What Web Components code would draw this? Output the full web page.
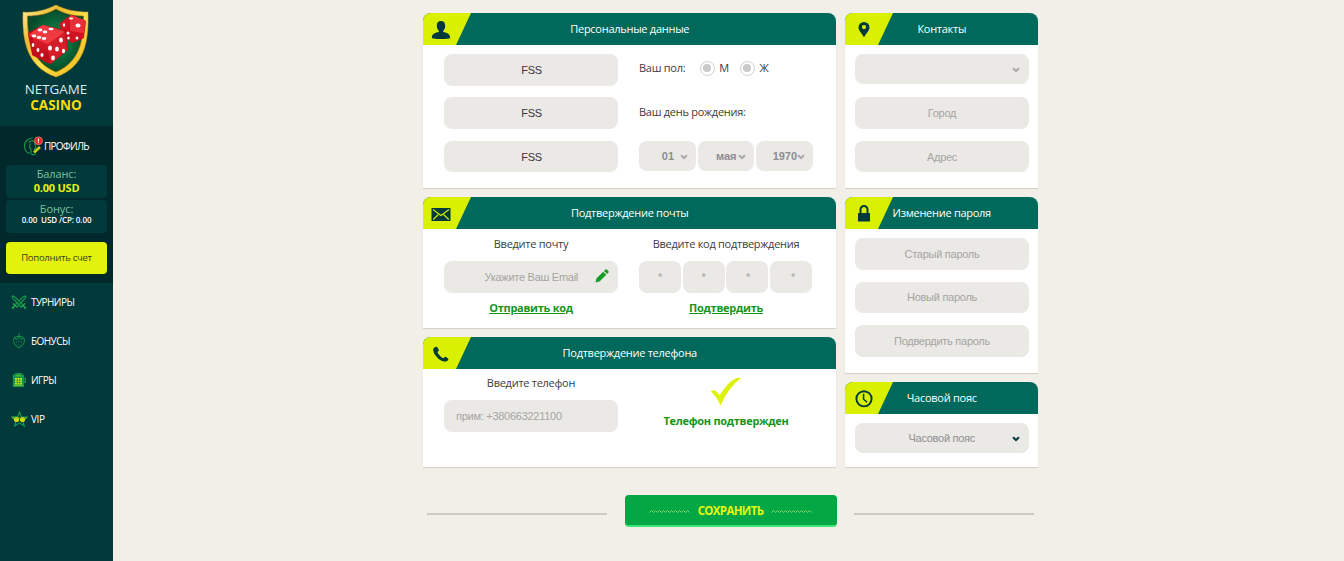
<!DOCTYPE html>
<html lang="ru">
<head>
<meta charset="utf-8">
<title>Netgame Casino — Профиль</title>
<style>
html,body{margin:0;height:100%;overflow:hidden}
body{background:#f2efe8;font-family:"Open Sans",sans-serif;font-size:11px;letter-spacing:-.27px;color:#3c3c3c}
</style>
</head>
<body>
<casino-app></casino-app>
<script>
const define = (name, html, setup) => {
  const tpl = document.createElement('template');
  tpl.innerHTML = html;
  customElements.define(name, class extends HTMLElement {
    constructor() {
      super();
      this.attachShadow({mode: 'open'}).append(tpl.content.cloneNode(true));
    }
    connectedCallback() { if (setup) setup(this, this.shadowRoot); }
  });
};

const ICONS = {
  user: '<svg width="20" height="20" viewBox="0 0 20 20" fill="#02393b"><path d="M10 1c2.700 0 4.200 2 4.200 4.700 0 2.500-1 4.100-2 5.100v1.300c3 .5 6.800 1.800 7 5.400 0 1-3 1.500-9.200 1.500S.8 18.500.8 17.500C1 13.900 4.800 12.600 7.800 12.100v-1.300c-1-1-2-2.600-2-5.100C5.800 3 7.300 1 10 1z"/></svg>',
  pin: '<svg width="20" height="20" viewBox="0 0 20 20"><path fill="#02393b" fill-rule="evenodd" d="M10 2a5.500 5.500 0 0 1 5.500 5.500C15.500 11 11.300 14 10 17.500 8.700 14 4.500 11 4.500 7.500A5.500 5.500 0 0 1 10 2zm0 3a2.100 2.100 0 1 0 0 4.200A2.100 2.100 0 0 0 10 5z"/></svg>',
  mail: '<svg width="20" height="20" viewBox="0 0 20 20"><rect x=".5" y="4" width="19" height="13" rx=".6" fill="#02393b"/><path d="M2 5.500l8 6 8-6M2.200 15.500l5.200-5M17.800 15.500l-5.200-5" fill="none" stroke="#d4ee04" stroke-width="1.100"/></svg>',
  phone: '<svg width="20" height="20" viewBox="0 0 20 20"><path fill="#02393b" d="M3.200 3.800l1.800-1q1-.3 1.500.6l1.300 2.500q.3.900-.5 1.400l-1 .8q.8 2.500 3.800 4.900 1.200.9 2.200 1.200l1.200-1q.8-.6 1.500-.1l2 1.500q.8.700.2 1.500-1.800 1.900-4.300 1.400-4.500-1-7.700-5.200Q2 8.500 2.300 5.200q.1-.9.900-1.400z"/></svg>',
  lock: '<svg width="20" height="20" viewBox="0 0 20 20"><path d="M6.500 9V5.500a3.500 3.500 0 0 1 7 0V9" fill="none" stroke="#02393b" stroke-width="2"/><rect x="4" y="9" width="12" height="8.500" rx=".6" fill="#02393b"/></svg>',
  clock: '<svg width="20" height="20" viewBox="0 0 20 20" fill="none" stroke="#02393b"><circle cx="10" cy="9.800" r="7.600" stroke-width="1.900"/><path d="M9.600 4.700v5.500l3.500 3" stroke-width="1.500"/></svg>',
  swords: '<svg width="16" height="16" viewBox="0 0 16 16" fill="none" stroke="#129447" stroke-width="1.300"><path d="M1 2l2.500.5 8 8M1 2l1 2.500 7.500 8M15 2l-2.500.5-8 8M15 2l-1 2.500-7.500 8"/><path d="M2 9.500l4.500 4M14 9.500l-4.500 4M4 11.500L1.500 14M12 11.500l2.500 2.500M1 13.500l1.500 1.300M15 13.500l-1.500 1.300" stroke="#22b04b"/></svg>',
  berry: '<svg width="16" height="16" viewBox="0 0 16 16" fill="none" stroke="#189a48"><path d="M4 4.200C1.800 6 2.500 9 3.700 11.200c1 1.800 2.900 3 4.300 3.300 1.400-.3 3.300-1.500 4.300-3.300 1.200-2.200 1.900-5.200-.3-7-2-1-6-1-8 0zM8 .5v3.500"/><path d="M4 5l2 1.500L8 4.500l2 2L12 5M5 9h1M8 7.800v1.400M10 9h1M6.500 12h.8M9 12h.8"/></svg>',
  slot: '<svg width="16" height="16" viewBox="0 0 16 16"><path fill="#159747" d="M4.500 1h6l.7 1.500H13v12.500H1.800V2.500h2z"/><path fill="#d5e70c" d="M4 6h7v6.500H4z"/><path d="M4 8.200h7M4 10.400h7M6.300 6v6.500M8.700 6v6.500" stroke="#159747" stroke-width=".7"/><path d="M5 3.800h5M3 13.500h8.500" stroke="#5fc12d"/><path d="M13 10.500h1.200V5.500" stroke="#1ca24b" stroke-width="1.200" fill="none"/></svg>',
  vip: '<svg width="18" height="16" viewBox="0 0 18 16"><path d="M8.500 1l1.800 4.800 5.700.1-4.300 3.600 1.600 5.500-4.800-3.200L3.700 15l1.600-5.500L1 5.900l5.700-.1z" fill="none" stroke="#199d49" stroke-width="1.100"/><circle cx="5.500" cy="8.500" r="2.600" fill="#c8db0b"/><circle cx="11.500" cy="8.500" r="2.600" fill="#c8db0b"/><path d="M1 7h15" stroke="#a1c818" stroke-width=".8"/></svg>'
};

/* Inline text run with optional spacing override */
define('ui-text', '<style>:host{display:inline-block;white-space:nowrap;line-height:16px}</style><slot></slot>', el => {
  if (el.getAttribute('ls')) el.style.letterSpacing = el.getAttribute('ls') + 'px';
});

define('ui-icon', '<style>:host{display:block;flex:none}svg{display:block}</style><span></span>');

define('ui-field', `<style>
:host{display:flex;align-items:center;justify-content:center;box-sizing:border-box;height:31.5px;border-radius:8px;background:#eae9e5;font:11px/16px "Liberation Sans",sans-serif;color:#a5a5a2;white-space:nowrap}
:host([filled]){color:#38363c;padding-left:1px}
:host([left]){justify-content:flex-start;padding-left:12px}
</style><slot></slot>`);

define('ui-select', `<style>
:host{display:grid;grid-template-columns:1fr 8px;align-items:center;box-sizing:border-box;height:30px;padding-right:9px;border-radius:8px;background:#eae9e5;font:11px/16px "Liberation Sans",sans-serif;color:#8d8d90;white-space:nowrap;--arrow:#a9a9a7}
:host([small]){padding-right:8px;font-weight:bold;letter-spacing:-.05px}
span{text-align:right}
:host([dark]){--arrow:#02393b}
svg{display:block;overflow:visible;margin-top:1px}
</style><span><slot></slot></span><svg width="8" height="6" viewBox="0 0 8 6"><path d="M1 1.300l3 2.800 3-2.800" fill="none" stroke="var(--arrow)" stroke-width="2"/></svg>`);

define('ui-radio', `<style>
:host{display:block;box-sizing:border-box;width:15px;height:15px;border:1px solid #cfcfcf;border-radius:50%;background:#fff;padding:2.500px}
i{display:block;width:8px;height:8px;border-radius:50%;background:#c9c9c9}
</style><i></i>`);

define('ui-card', `<style>
:host{display:flex;flex-direction:column;background:#fff;border-radius:8px 8px 0 0;box-shadow:0 1px 1px #d3cfc5}
header{display:flex;align-items:center;height:32px;box-sizing:border-box;border-radius:8px 8px 0 0;overflow:hidden;background:#00695c;color:#fff;flex:none}
.tab{width:48px;height:32px;margin-right:-48px;flex:none;background:#d9f000;clip-path:polygon(0 0,100% 0,33px 100%,0 100%);display:flex;align-items:center;padding:1px 0 0 var(--icon-inset,8px);box-sizing:border-box}
h2{flex:1;margin:0;font-size:11px;font-weight:400;text-align:center;line-height:32px;white-space:nowrap;padding-left:.5px}
.body{flex:1;display:flex;flex-direction:column}
</style><header><div class="tab"><ui-icon></ui-icon></div><h2><slot name="title"></slot></h2></header><div class="body"><slot></slot></div>`, (el, r) => {
  r.querySelector('ui-icon').shadowRoot.querySelector('span').innerHTML = ICONS[el.getAttribute('icon')];
});

define('nav-item', `<style>
:host{display:flex;align-items:center;height:39px;color:#fff;font-size:10px;padding-left:11px}
.i{width:20px;flex:none}
</style><div class="i"><ui-icon></ui-icon></div><slot></slot>`, (el, r) => {
  r.querySelector('ui-icon').shadowRoot.querySelector('span').innerHTML = ICONS[el.getAttribute('icon')];
});

define('brand-logo', `<style>
:host{display:flex;flex-direction:column;align-items:center;height:126px;width:112px;box-sizing:border-box;padding-top:3px;letter-spacing:0}
svg{display:block}
.a{font-size:13.400px;line-height:16px;color:#dcebea;margin-top:2px;font-weight:400}
.b{font-size:13.500px;line-height:16px;color:#f7dc0c;font-weight:700}
</style>
<svg width="72" height="76" viewBox="0 0 72 76">
<defs>
<linearGradient id="g" x1="0" y1="0" x2="1" y2="1"><stop offset="0" stop-color="#fff1a0"/><stop offset=".3" stop-color="#edb92f"/><stop offset=".55" stop-color="#fde14a"/><stop offset="1" stop-color="#f0b010"/></linearGradient>
<radialGradient id="f"><stop offset="0" stop-color="#16904e"/><stop offset="1" stop-color="#044b2b"/></radialGradient>
<linearGradient id="r" x1="0" y1="0" x2="0" y2="1"><stop offset="0" stop-color="#ee2b36"/><stop offset="1" stop-color="#b50714"/></linearGradient>
</defs>
<path d="M3 9C15 10 26 7 36 2c10 5 20 7 32 7 1 29-3 55-32 65C7 64 2 38 3 9z" fill="url(#g)" stroke="#c08a18" stroke-width=".5"/>
<path d="M7.500 13c11 0 20-2 28.500-7 9 5 17.500 7 27.500 7 0 25-4 46-27.500 56C12 59 7.500 38 7.500 13z" fill="url(#f)" stroke="#9a6b0c" stroke-width=".7"/>
<g stroke-linejoin="round">
<path d="M52 14l12 5-2 15-10 4-9-10-1-7z" fill="#cf1320" stroke="#cf1320" stroke-width="4"/>
<path d="M51 13l13 5-1 11-12-2z" fill="#e8303a" stroke="#e8303a" stroke-width="2"/>
<path d="M23 24l21 5 2 17-16 13-16-8-4-20z" fill="url(#r)" stroke="#c50e1b" stroke-width="4"/>
<path d="M23 23l20 6-15 11-18-8z" fill="#ef3a42" stroke="#ef3a42" stroke-width="2"/>
<path d="M28 42l16-11 2 15-15 13z" fill="#d51d29" stroke="#d51d29" stroke-width="2"/>
</g>
<g fill="#fff"><ellipse cx="20" cy="27" rx="2.400" ry="1.400"/><ellipse cx="25" cy="29" rx="2.400" ry="1.400"/><ellipse cx="31" cy="26" rx="2.500" ry="1.300"/><ellipse cx="14" cy="33" rx="2.300" ry="1.400"/><ellipse cx="19" cy="34.500" rx="2.300" ry="1.400"/><ellipse cx="24" cy="35.500" rx="2.300" ry="1.400"/>
<ellipse cx="13" cy="42" rx="1.300" ry="1.900"/><ellipse cx="18" cy="47" rx="1.400" ry="2"/><ellipse cx="22" cy="52" rx="1.500" ry="2"/>
<ellipse cx="30" cy="45" rx="2" ry="2.600"/><ellipse cx="41" cy="37" rx="1.900" ry="2.500"/><ellipse cx="37" cy="46" rx="1.900" ry="2.600"/><ellipse cx="43.500" cy="48" rx="1.600" ry="2.300"/><ellipse cx="33" cy="55" rx="1.900" ry="2.400"/>
<ellipse cx="58" cy="22.500" rx="2.500" ry="2"/><ellipse cx="51" cy="15.500" rx="2.200" ry="1.100"/><ellipse cx="44" cy="22" rx="1.200" ry="1.800"/><ellipse cx="48" cy="30" rx="1.500" ry="1.600"/><ellipse cx="48.500" cy="35" rx="1.300" ry="1.500"/><ellipse cx="57" cy="35" rx="1.400" ry="1.500"/></g>
</svg>
<ui-text class="a">NETGAME</ui-text><ui-text class="b">CASINO</ui-text>`);

define('side-bar', `<style>
:host{display:block;width:113px;flex:none;background:#02393b;height:561px}
.profile{height:157px;background:#01292c;box-sizing:border-box;padding:8px 6px 0}
.user{display:flex;align-items:center;height:23px;padding-left:17px;color:#fff;font-size:10px;gap:1px}
.box{display:flex;flex-direction:column;align-items:center;height:33px;border-radius:4px;background:#02393b;color:#7fc39b;margin-bottom:2px;padding-top:2px;box-sizing:border-box}
.box.first{margin-top:8px}
.box ui-text{line-height:14px;font-size:11px}
.box ui-text.l{letter-spacing:-.1px}
.box .v{color:#e3f20d;font-weight:700}
.box ui-text.w{color:#fff;font-size:8px;line-height:10px;white-space:pre;font-weight:600;letter-spacing:-.1px;margin-top:-1px}
.pay{height:32px;margin-top:9px;border-radius:4px;background:#e2f20b;color:#37461a;display:flex;align-items:center;justify-content:center;font-size:9.500px}
nav{margin-top:-.500px}
</style>
<brand-logo></brand-logo>
<div class="profile">
<div class="user"><svg width="20" height="20" viewBox="0 0 20 20" fill="none"><path d="M7 17.500C3 16.500 1.500 13 1.500 10c0-4 3-8 8-8M13 18c-2 .8-4 .6-5-.3M7.500 7.500C6 10 6.500 12 8 13v4M11.500 7.500c2 3 1 5 0 5.500v4M5.500 7q4-5 7 .5" stroke="#159447" stroke-width="1.200"/><path d="M11 16.500l6-5.500" stroke="#bfd016" stroke-width="2.600"/><circle cx="15.500" cy="4.800" r="4" fill="#ec2630" stroke="#ff8c86" stroke-width=".6"/><path d="M15.500 2.500v3M15.500 6.200v1" stroke="#fff"/></svg><ui-text ls="-0.75">ПРОФИЛЬ</ui-text></div>
<div class="box first"><ui-text class="l">Баланс:</ui-text><ui-text class="v" ls="-0.22">0.00 USD</ui-text></div>
<div class="box"><ui-text class="l">Бонус:</ui-text><ui-text class="w">0.00  USD /CP: 0.00</ui-text></div>
<div class="pay"><ui-text>Пополнить счет</ui-text></div>
</div>
<nav>
<nav-item icon="swords"><ui-text ls="-0.55">ТУРНИРЫ</ui-text></nav-item>
<nav-item icon="berry"><ui-text ls="-0.55">БОНУСЫ</ui-text></nav-item>
<nav-item icon="slot"><ui-text ls="-0.55">ИГРЫ</ui-text></nav-item>
<nav-item icon="vip"><ui-text ls="-0.4">VIP</ui-text></nav-item>
</nav>`);

define('save-button', `<style>
:host{display:flex;align-items:center;justify-content:center;gap:8px;box-sizing:border-box;width:212px;height:32px;border-radius:4px;background:#03a743;border-bottom:2px solid #3fe673;color:#e8f80c;font-size:11.500px;font-weight:700;padding-top:1px}
svg{display:block;margin-top:2px}
</style>
<svg width="41" height="5" viewBox="0 0 41 5"><path d="M.5 3.500l2-2 2 2 2-2 2 2 2-2 2 2 2-2 2 2 2-2 2 2 2-2 2 2 2-2 2 2 2-2 2 2 2-2 2 2 2-2 2 2" fill="none" stroke="#8be06a" stroke-width=".9"/></svg>
<slot></slot>
<svg width="41" height="5" viewBox="0 0 41 5"><path d="M.5 3.500l2-2 2 2 2-2 2 2 2-2 2 2 2-2 2 2 2-2 2 2 2-2 2 2 2-2 2 2 2-2 2 2 2-2 2 2 2-2 2 2" fill="none" stroke="#8be06a" stroke-width=".9"/></svg>`);

define('profile-form', `<style>
:host{display:block;width:615px;margin-left:310px;padding-top:13px}
.cols{display:grid;grid-template-columns:413px 193px;column-gap:9px}
.col{display:flex;flex-direction:column;gap:9px}
.col:last-child{--icon-inset:9px}
.two{display:grid;grid-template-columns:174px 174px;column-gap:21px;padding:9px 0 0 21px}
.stack{display:flex;flex-direction:column;gap:11.900px}
.right{padding:9px 9px 0 10px}
.pw{gap:12px}
.gender{display:flex;align-items:center;height:28px}
.gender ui-radio:first-of-type{margin-left:14.500px}
.gender ui-radio{margin-right:4.500px}
.gender ui-radio:last-of-type{margin-left:11px}
.birth{height:16px;margin-top:22px;line-height:16px;margin-bottom:21px}
.dates{display:grid;grid-template-columns:57px 56px 57px;gap:2px}
.center{display:flex;flex-direction:column;align-items:center}
.center ui-field{align-self:stretch}
.link{color:#16951d;font-weight:700;text-decoration:underline;margin-top:7px}
.code{display:grid;grid-template-columns:repeat(4,42px);column-gap:1.500px;align-self:flex-start}
.ok{color:#16951d;font-weight:700}
.mail{display:grid;grid-template-columns:1fr auto 14px;column-gap:17px;padding:0 9px 0 20px;box-sizing:border-box}
.save{display:flex;align-items:center;justify-content:space-between;margin-top:28px;padding:0 4px}
.save hr{width:180px;height:2px;border:0;margin:6px 0 0;background:#ceccbf}
</style>
<div class="cols">
<div class="col">
<ui-card icon="user" style="height:175px"><ui-text slot="title">Персональные данные</ui-text>
<div class="two"><div class="stack"><ui-field filled>FSS</ui-field><ui-field filled>FSS</ui-field><ui-field filled>FSS</ui-field></div>
<div><div class="gender"><ui-text>Ваш пол:</ui-text><ui-radio></ui-radio><ui-text>М</ui-text><ui-radio></ui-radio><ui-text>Ж</ui-text></div>
<div class="birth"><ui-text>Ваш день рождения:</ui-text></div>
<div class="dates"><ui-select small>01<span style="display:inline-block;width:6px"></span></ui-select><ui-select small>мая<span style="display:inline-block;width:1.5px"></span></ui-select><ui-select small>1970</ui-select></div></div></div></ui-card>
<ui-card icon="mail" style="height:131px"><ui-text slot="title">Подтверждение почты</ui-text>
<div class="two" style="padding-top:7px"><div class="center"><ui-text>Введите почту</ui-text><ui-field class="mail" style="margin-top:9px"><span></span><ui-text>Укажите Ваш Email</ui-text><svg style="justify-self:end;margin-top:-2px" width="14" height="14" viewBox="0 0 14 14" fill="#169c25"><path d="M.5 13.500l.9-4L8.200 2.700l3.100 3.100L4.500 12.600zM9 1.900l1.400-1.400q.7-.5 1.400 0l1.700 1.700q.5.700 0 1.400L12.100 5z"/></svg></ui-field><ui-text class="link">Отправить код</ui-text></div>
<div class="center"><ui-text>Введите код подтверждения</ui-text><div class="code" style="margin-top:9px"><ui-field>*</ui-field><ui-field>*</ui-field><ui-field><span style="padding-left:2px">*</span></ui-field><ui-field><span style="padding-left:5px">*</span></ui-field></div><ui-text class="link">Подтвердить</ui-text></div></div></ui-card>
<ui-card icon="phone" style="height:130px"><ui-text slot="title">Подтверждение телефона</ui-text>
<div class="two" style="padding-top:6px"><div class="center"><ui-text>Введите телефон</ui-text><ui-field left style="margin-top:9px">прим: +380663221100</ui-field></div>
<div class="center"><svg style="margin-top:2px" width="32" height="30" viewBox="0 0 32 30"><path d="M.8 14.500q2.500-2.500 5.200-.3 2 1.600 3.500 4.300Q18 4.500 26 1.200q3-.7 5-.2Q18 11 10.500 28.500 7 20 .8 14.500z" fill="#def10a"/></svg><ui-text class="ok" ls="-0.3" style="margin-top:6px">Телефон подтвержден</ui-text></div></div></ui-card>
</div>
<div class="col">
<ui-card icon="pin" style="height:175px"><ui-text slot="title">Контакты</ui-text><div class="stack right"><ui-select style="margin-bottom:1.500px"></ui-select><ui-field>Город</ui-field><ui-field>Адрес</ui-field></div></ui-card>
<ui-card icon="lock" style="height:176px"><ui-text slot="title">Изменение пароля</ui-text><div class="stack right pw"><ui-field>Старый пароль</ui-field><ui-field>Новый пароль</ui-field><ui-field>Подвердить пароль</ui-field></div></ui-card>
<ui-card icon="clock" style="height:85px"><ui-text slot="title">Часовой пояс</ui-text><div class="stack right"><ui-select dark><ui-text style="padding-right:37px">Часовой пояс</ui-text></ui-select></div></ui-card>
</div></div>
<div class="save"><hr><save-button><ui-text ls="-0.65">СОХРАНИТЬ</ui-text></save-button><hr></div>`);

define('casino-app', '<style>:host{display:flex;height:561px;overflow:hidden}</style><side-bar></side-bar><profile-form></profile-form>');
</script>
</body>
</html>
